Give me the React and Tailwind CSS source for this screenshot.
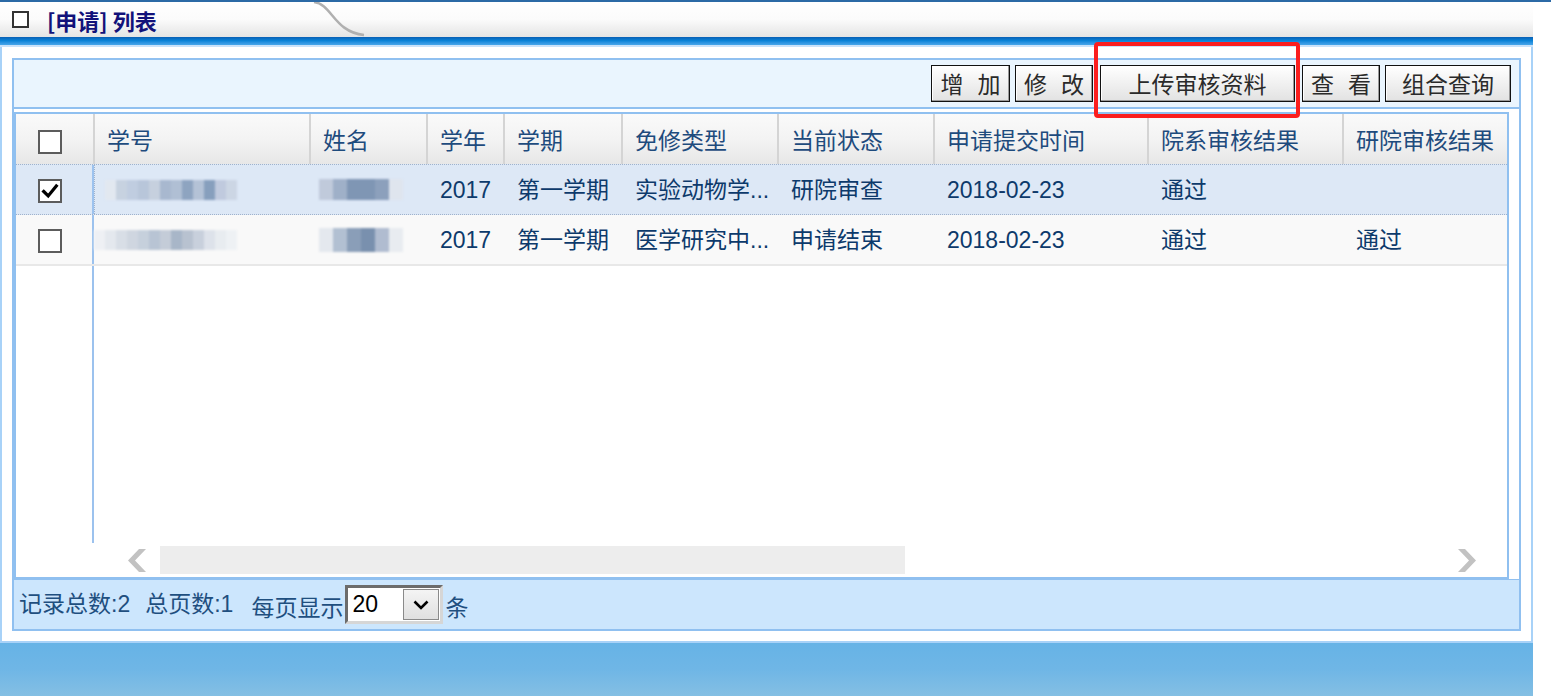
import React from "react";

const FONT = "font-['Liberation_Sans','Noto_Sans_CJK_SC',sans-serif]";

const cols = [
  { w: 79, t: null },
  { w: 216, t: "学号" },
  { w: 117, t: "姓名" },
  { w: 77, t: "学年" },
  { w: 118, t: "学期" },
  { w: 156, t: "免修类型" },
  { w: 156, t: "当前状态" },
  { w: 214, t: "申请提交时间" },
  { w: 195, t: "院系审核结果" },
  { w: 163, t: "研院审核结果" },
];

const rows = [
  {
    checked: true,
    id: ["#e2e8f0", "#c7d2e0", "#c0cde0", "#b8c6da", "#c6d0de", "#a8b8cf", "#b0bfd4", "#8ea4c0", "#b4c2d6", "#879fbd", "#c0cade", "#ccd6e4"],
    idOff: 10,
    name: ["#c0cadb", "#9fb0c8", "#7f96b4", "#7f96b4", "#8ca0bc", "#dfe5ee"],
    cells: ["2017", "第一学期", "实验动物学...", "研院审查", "2018-02-23", "通过", ""],
  },
  {
    checked: false,
    id: ["#eef0f4", "#e4e8ee", "#d8dee6", "#cfd6e0", "#c6d0dc", "#b8c4d4", "#c4ccd8", "#a8b6c8", "#b8c2d0", "#c8d0dc", "#dde2ea", "#e8ecf0", "#eef1f4"],
    idOff: 0,
    name: ["#e4e8ee", "#b2c0d2", "#8a9eb8", "#7990ae", "#b0bcd0", "#e8ecf0"],
    cells: ["2017", "第一学期", "医学研究中...", "申请结束", "2018-02-23", "通过", "通过"],
  },
];

function Cb({ checked }) {
  return (
    <div className="w-[24px] h-[24px] border-2 border-[#5c5c5c] bg-white flex items-center justify-center">
      {checked && (
        <svg viewBox="0 0 20 20" className="w-[18px] h-[18px]">
          <path d="M3 10.5 L8 15.5 L17 4.5" stroke="#000" strokeWidth="3.6" fill="none" strokeLinecap="square" />
        </svg>
      )}
    </div>
  );
}

function Blur({ colors, w = 11, h = 20 }) {
  return (
    <div className="flex blur-[1px]">
      {colors.map((c, i) => (
        <div key={i} style={{ background: c, width: w, height: h }} />
      ))}
    </div>
  );
}

function Btn({ children, w, spaced }) {
  return (
    <div
      className="h-[37px] border border-[#111] bg-gradient-to-b from-white to-[#e2e2e2] shadow-[inset_-1px_-1px_0_#9a9a9a,inset_1px_1px_0_#fff] flex items-center justify-center text-[23px] text-[#2a2a2a] font-['Noto_Sans_CJK_SC',sans-serif] leading-none"
      style={{ width: w }}
    >
      {spaced ? (
        <span className="flex gap-[14px]">
          <span>{children[0]}</span>
          <span>{children[1]}</span>
        </span>
      ) : (
        children
      )}
    </div>
  );
}

function Chevron({ dir }) {
  return (
    <svg viewBox="0 0 18 23" className="w-[18px] h-[23px]">
      {dir === "left" ? (
        <polygon points="11,0 18,0 7,11.5 18,23 11,23 0,11.5" fill="#c2c2c2" />
      ) : (
        <polygon points="7,0 0,0 11,11.5 0,23 7,23 18,11.5" fill="#c2c2c2" />
      )}
    </svg>
  );
}

export default function App() {
  return (
    <div className={`relative w-[1551px] h-[696px] bg-white overflow-hidden flex flex-col ${FONT}`}>
      <div className="h-[2px] bg-[#2c6aa6] shrink-0" />
      <div className="w-[1533px] flex flex-col shrink-0">
        {/* title bar */}
        <div className="relative h-[35px] bg-gradient-to-b from-white via-[#fbfbfb] to-[#e4e4e4] flex items-center pl-[12px]">
          <div className="w-[17px] h-[17px] border-[2.5px] border-[#333] bg-white" />
          <div className="ml-[18px] text-[22px] font-bold text-[#12127a] leading-none font-['Noto_Sans_CJK_SC',sans-serif]">
            [申请] 列表
          </div>
          <svg className="absolute left-[300px] top-0 w-[80px] h-[35px]" viewBox="0 0 80 35">
            <path d="M14 0 C 32 2, 34 30, 64 33" stroke="#b0b0b0" strokeWidth="2.5" fill="none" />
          </svg>
        </div>
        <div className="h-[8px] bg-gradient-to-b from-[#0a5fb4] via-[#0a86da] to-[#46a6ea]" />
        <div className="h-[2px] bg-[#c8e2fa]" />
        {/* frame */}
        <div className="border-x-2 border-b-2 border-[#a8d2f8] pt-[11px] pb-[10px] px-[10px]">
          <div className="border-2 border-[#90c0f0] flex flex-col">
            {/* toolbar */}
            <div className="h-[49px] bg-[#eaf5fe] border-b-2 border-[#90c0f0] flex items-center justify-end pr-[8px]">
              <Btn w={79} spaced>
                {["增", "加"]}
              </Btn>
              <div className="w-[5px]" />
              <Btn w={78} spaced>
                {["修", "改"]}
              </Btn>
              <div className="w-[7px]" />
              <Btn w={195}>上传审核资料</Btn>
              <div className="w-[7px]" />
              <Btn w={78} spaced>
                {["查", "看"]}
              </Btn>
              <div className="w-[5px]" />
              <Btn w={126}>组合查询</Btn>
            </div>
            <div className="h-[3px]" />
            {/* grid */}
            <div className="w-[1495px] h-[467px] border-2 border-[#90c0f0] bg-white flex flex-col">
              {/* header */}
              <div className="h-[50px] flex bg-gradient-to-b from-[#fafafa] via-[#f3f3f3] to-[#e7e7e7] shrink-0">
                {cols.map((c, i) => (
                  <div
                    key={i}
                    style={{ width: c.w }}
                    className={`h-full flex items-center shrink-0 pt-[5px] ${i < cols.length - 1 ? "border-r-2 border-[#d4d4d4]" : ""} ${i === 0 ? "pl-[22px]" : "pl-[12px]"} text-[23px] text-[#1e4b7d] leading-none`}
                  >
                    {i === 0 ? <Cb /> : c.t}
                  </div>
                ))}
              </div>
              {/* rows */}
              {rows.map((r, ri) => (
                <div
                  key={ri}
                  className={`h-[51px] flex shrink-0 ${ri === 0 ? "bg-[#dde8f6] border-y border-dotted border-[#9fb2cc]" : "bg-[#f9f9f9] border-b-2 border-[#e8e8e8]"}`}
                >
                  <div className="w-[78px] h-full border-r-2 border-[#9cc2ee] flex items-center pl-[22px] pt-[3px] shrink-0">
                    <Cb checked={r.checked} />
                  </div>
                  <div
                    className={`w-[217px] h-full flex items-center shrink-0 ${ri === 0 ? "border-l border-dotted border-[#9fb2cc]" : ""}`}
                  >
                    <div style={{ marginLeft: r.idOff }}>
                      <Blur colors={r.id} />
                    </div>
                  </div>
                  <div className="w-[117px] h-full flex items-center pl-[8px] shrink-0">
                    <Blur colors={r.name} w={14} h={ri === 0 ? 21 : 24} />
                  </div>
                  {r.cells.map((t, ci) => (
                    <div
                      key={ci}
                      style={{ width: cols[ci + 3].w }}
                      className="h-full flex items-center pl-[12px] pt-[2px] shrink-0 text-[23px] text-[#0d3a6b] leading-none whitespace-nowrap overflow-hidden"
                    >
                      {t}
                    </div>
                  ))}
                </div>
              ))}
              {/* empty body */}
              <div className="flex-1 flex">
                <div className="w-[78px] h-full border-r-2 border-[#9cc2ee]" />
              </div>
              {/* horizontal scrollbar */}
              <div className="h-[34px] flex items-center shrink-0">
                <div className="w-[112px]" />
                <Chevron dir="left" />
                <div className="w-[14px]" />
                <div className="w-[745px] h-[28px] bg-[#ededed]" />
                <div className="flex-1" />
                <Chevron dir="right" />
                <div className="w-[31px]" />
              </div>
            </div>
            {/* footer */}
            <div className="h-[50px] bg-[#cce6fd] border-t border-[#90c0f0] flex items-center pl-[5px] text-[23px] text-[#1f4f7f] leading-none">
              <span>记录总数:2</span>
              <span className="ml-[15px]">总页数:1</span>
              <span className="ml-[18px] pt-[4px] font-['Noto_Sans_CJK_SC',sans-serif]">每页显示</span>
              <div className="ml-[2px] w-[98px] h-[39px] border-[3px] border-t-[#6c6c6c] border-l-[#6c6c6c] border-b-[#d6d6d6] border-r-[#d6d6d6] bg-white flex items-center">
                <span className="ml-[4px] text-black text-[23px] font-['Liberation_Sans',sans-serif]">20</span>
                <div className="ml-auto mr-[1px] w-[36px] h-[31px] bg-gradient-to-b from-[#f4f4f4] to-[#e0e0e0] border border-[#8a8a8a] flex items-center justify-center">
                  <svg viewBox="0 0 16 10" className="w-[16px] h-[10px]">
                    <path d="M1.5 1.5 L8 8 L14.5 1.5" stroke="#000" strokeWidth="2.6" fill="none" />
                  </svg>
                </div>
              </div>
              <span className="ml-[2px] pt-[4px] font-['Noto_Sans_CJK_SC',sans-serif]">条</span>
            </div>
          </div>
        </div>
      </div>
      <div className="w-[1533px] flex-1 bg-gradient-to-b from-[#66b3e6] via-[#6fb6e6] to-[#84bfe3]" />
      {/* red highlight overlay */}
      <div className="absolute left-[1094px] top-[42px] w-[206px] h-[76px] border-4 border-[#fb1e1e] rounded-[4px]" />
    </div>
  );
}
